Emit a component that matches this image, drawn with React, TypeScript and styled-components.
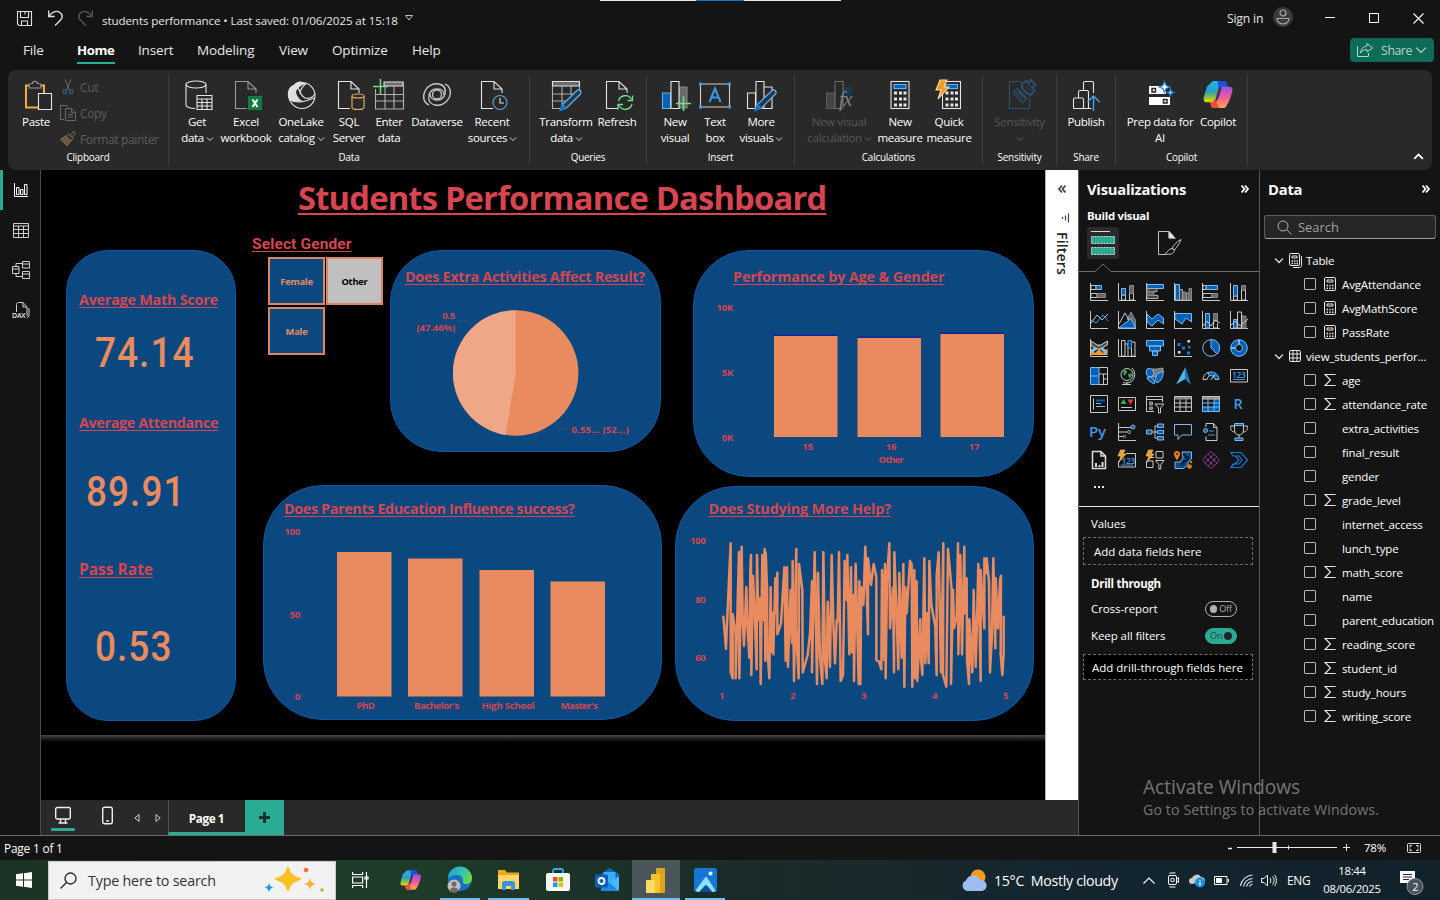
import React from "react";
import styled, { createGlobalStyle, css } from "styled-components";

const teal = "#2aac94";
const panelBlue = "#0a487f";
const orange = "#e98b5f";
const red = "#d64550";
const blue = "#0063b8";
const sky = "#7fb8ea";
const grey = "#c8c8c8";

const GlobalStyle = createGlobalStyle`
  * { box-sizing: border-box; }
  body {
    margin: 0;
    background: #141414;
    font-family: "Open Sans", "Noto Sans", sans-serif;
    font-size: 11.5px;
    letter-spacing: -0.2px;
    color: #fff;
    overflow: hidden;
  }
  svg { display: block; flex: none; overflow: visible; }
`;

const Window = styled.div`
  width: 1440px;
  height: 900px;
  display: flex;
  flex-direction: column;
  background: #141414;
`;

/* ---------- title bar ---------- */

const TitleBar = styled.header`
  height: 36px;
  display: flex;
  align-items: center;
  padding-left: 17px;
  position: relative;
  color: #e6e6e6;
`;
const TopMarker = styled.div`
  position: absolute;
  left: 600px;
  top: 0;
  width: 241px;
  height: 1px;
  background: linear-gradient(90deg, #e8e8e8 96px, #0078d4 96px, #0078d4 144px, #e8e8e8 144px);
`;
const Slot = styled.div<{ $w: number }>`
  width: ${(p) => p.$w}px;
  flex: none;
`;
const DocName = styled.div`
  width: 303px;
  padding-top: 4px;
  font-size: 11.6px;
  letter-spacing: -0.1px;
  white-space: pre;
`;
const Spacer = styled.div`
  flex: 1;
`;
const SignIn = styled.div`
  width: 46px;
  font-size: 12.2px;
  letter-spacing: -0.2px;
`;

/* ---------- tab strip ---------- */

const TabStrip = styled.nav`
  height: 34px;
  display: flex;
  padding-left: 23px;
  padding-right: 6px;
  font-size: 13.5px;
  letter-spacing: -0.15px;
  color: #e8e8e8;
`;
const Tab = styled.div<{ $w: number; $active?: boolean }>`
  width: ${(p) => p.$w}px;
  span {
    display: inline-block;
    height: 28px;
    line-height: 28px;
    ${(p) =>
      p.$active &&
      css`
        width: 38px;
        font-weight: 700;
        font-size: 13.2px;
        letter-spacing: -0.4px;
        color: #fff;
        border-bottom: 2px solid ${teal};
      `}
  }
`;
const ShareButton = styled.button`
  width: 84px;
  height: 24px;
  margin-top: 2px;
  border: 0;
  border-radius: 4px;
  background: #0d6b58;
  color: #b9d2cb;
  display: flex;
  align-items: center;
  padding: 0 7px;
  font: 12.3px "Open Sans", sans-serif;
  letter-spacing: -0.45px;
  span {
    width: 31px;
    margin: 0 4px 0 8px;
  }
`;

/* ---------- ribbon ---------- */

const Ribbon = styled.section`
  height: 100px;
  margin: 0 8px;
  background: #292929;
  border-radius: 8px;
  display: flex;
  padding: 4px 0;
  position: relative;
`;
const Group = styled.div<{ $w: number }>`
  width: ${(p) => p.$w}px;
  height: 92px;
  border-right: 1px solid #3d3d3d;
  display: flex;
  flex-direction: column;
`;
const GroupItems = styled.div<{ $pad: number }>`
  display: flex;
  height: 76px;
  padding-left: ${(p) => p.$pad}px;
`;
const GroupName = styled.div`
  text-align: center;
  font-size: 9.9px;
  font-weight: 500;
  letter-spacing: -0.2px;
  line-height: 15px;
`;
const Command = styled.div<{ $w: number; $dim?: boolean }>`
  width: ${(p) => p.$w}px;
  flex: none;
  display: flex;
  flex-direction: column;
  align-items: center;
  font-weight: ${(p) => (p.$dim ? 400 : 500)};
  letter-spacing: -0.3px;
  color: ${(p) => (p.$dim ? "#575757" : "#fff")};
  svg.big {
    margin-top: 5px;
    margin-bottom: 4px;
  }
`;
const CommandText = styled.div`
  white-space: nowrap;
  line-height: 16px;
  height: 16px;
  display: flex;
  align-items: center;
  gap: 3px;
  svg {
    margin-top: 2px;
  }
`;
const ClipList = styled.div`
  display: flex;
  flex-direction: column;
  padding: 0 0 0 3px;
  color: #5c5c5c;
`;
const ClipRow = styled.div`
  height: 26px;
  flex: none;
  display: flex;
  align-items: center;
  gap: 4px;
  font-size: 12px;
  letter-spacing: -0.35px;
  white-space: nowrap;
`;
const Collapse = styled.div`
  position: absolute;
  right: 9px;
  bottom: 11px;
`;

/* ---------- body ---------- */

const Body = styled.main`
  height: 665px;
  display: flex;
`;
const Rail = styled.aside`
  width: 41px;
  border-right: 1px solid #4a4a4a;
  display: flex;
  flex-direction: column;
`;
const RailItem = styled.div<{ $active?: boolean }>`
  height: 40px;
  display: flex;
  align-items: center;
  justify-content: center;
  padding-right: 2px;
  border-left: 3px solid ${(p) => (p.$active ? teal : "transparent")};
`;
const Center = styled.div`
  width: 1037px;
  display: flex;
  flex-direction: column;
`;
const CenterTop = styled.div`
  height: 630px;
  display: flex;
`;
const Canvas = styled.div`
  position: relative;
  width: 1004px;
  background: #000;
  overflow: hidden;
`;
const PageEdge = styled.div`
  position: absolute;
  left: 0;
  right: 0;
  top: 565px;
  height: 7px;
  background: linear-gradient(#484848, #1c1c1c 55%, #000);
`;
const Visual = styled.section<{ $x: number; $y: number; $w: number; $h: number; $r: number }>`
  position: absolute;
  left: ${(p) => p.$x}px;
  top: ${(p) => p.$y}px;
  width: ${(p) => p.$w}px;
  height: ${(p) => p.$h}px;
  border-radius: ${(p) => p.$r}px;
  border: 1px solid #0d59a5;
  background: ${panelBlue};
  > svg {
    position: absolute;
    left: -1px;
    top: -1px;
  }
`;
const Caption = styled.h2<{ $x: number; $y: number; $ls: number; $size?: number }>`
  position: absolute;
  left: ${(p) => p.$x}px;
  top: ${(p) => p.$y}px;
  margin: 0;
  font-size: ${(p) => p.$size ?? 14.4}px;
  letter-spacing: ${(p) => p.$ls}px;
  line-height: 20px;
  font-weight: 700;
  color: ${red};
  white-space: nowrap;
  text-decoration: underline;
  text-decoration-thickness: 1px;
  text-underline-offset: 2px;
  text-decoration-skip-ink: none;
`;
const PageTitle = styled(Caption)`
  line-height: 44px;
  text-decoration-thickness: 2px;
  text-underline-offset: 3px;
`;
const SlicerTitle = styled(Caption)`
  font-family: Roboto, sans-serif;
`;
const ScoreCard = styled.div<{ $x: number; $y: number }>`
  position: absolute;
  left: ${(p) => p.$x}px;
  top: ${(p) => p.$y}px;
  font: 500 43px/48px Roboto, sans-serif;
  letter-spacing: 1.2px;
  color: ${orange};
  transform: scaleX(0.86);
  transform-origin: 0 0;
  white-space: nowrap;
`;
const Slicer = styled.div`
  position: absolute;
  left: 227px;
  top: 87px;
  display: grid;
  grid-template-columns: 57px 57px;
  grid-auto-rows: 48px;
  gap: 2px 1px;
`;
const SlicerButton = styled.div<{ $on?: boolean }>`
  border: 2px solid #dc8560;
  background: ${(p) => (p.$on ? "#c0c0c0" : panelBlue)};
  color: ${(p) => (p.$on ? "#000" : orange)};
  font-size: 9.4px;
  font-weight: 700;
  letter-spacing: -0.25px;
  display: flex;
  align-items: center;
  justify-content: center;
`;
const ChartText = styled.text`
  font: 700 9.6px "Open Sans", sans-serif;
  letter-spacing: -0.3px;
  fill: ${red};
`;

const FiltersPane = styled.aside`
  width: 33px;
  background: #fff;
  border-left: 1px solid #b5b5b5;
  color: #252423;
  display: flex;
  flex-direction: column;
  align-items: center;
  padding-top: 15px;
`;
const FilterGlyph = styled.svg`
  margin: 20px 0 0 6px;
`;
const FiltersLabel = styled.div`
  writing-mode: vertical-rl;
  font-size: 14.2px;
  font-weight: 600;
  letter-spacing: 0.1px;
  line-height: 20px;
  margin-top: 9px;
`;

const PageTabs = styled.div`
  height: 35px;
  background: #292929;
  display: flex;
  align-items: center;
`;
const ViewButton = styled.div<{ $w: number; $active?: boolean }>`
  width: ${(p) => p.$w}px;
  height: 35px;
  display: flex;
  flex-direction: column;
  align-items: center;
  justify-content: space-between;
  padding: 7px 0 4px;
  &::after {
    content: "";
    width: 24px;
    height: 3px;
    border-radius: 1px;
    background: ${(p) => (p.$active ? teal : "transparent")};
  }
`;
const PageTab = styled.div`
  width: 77px;
  height: 35px;
  border-left: 1px solid #555;
  border-bottom: 3px solid ${teal};
  padding-right: 1px;
  text-align: center;
  font-weight: 700;
  font-size: 11.8px;
  letter-spacing: -0.45px;
  line-height: 37px;
`;
const AddPage = styled.div`
  width: 39px;
  height: 35px;
  background: ${teal};
  display: flex;
  align-items: center;
  justify-content: center;
`;

/* ---------- right panes ---------- */

const Pane = styled.aside<{ $w: number }>`
  width: ${(p) => p.$w}px;
  border-left: 1px solid #555;
  display: flex;
  flex-direction: column;
`;
const PaneHeader = styled.div`
  height: 38px;
  padding: 0 10px 0 8px;
  display: flex;
  align-items: center;
  justify-content: space-between;
  font-size: 14.8px;
  font-weight: 700;
  letter-spacing: -0.25px;
`;
const BuildLabel = styled.div`
  padding-left: 8px;
  height: 19px;
  line-height: 16px;
  font-weight: 700;
  letter-spacing: -0.3px;
  font-size: 11.4px;
`;
const Modes = styled.div`
  display: flex;
  gap: 34px;
  padding-left: 8px;
  height: 37px;
`;
const Mode = styled.div<{ $active?: boolean }>`
  width: 32px;
  height: 32px;
  border-radius: 2px;
  background: ${(p) => (p.$active ? "#2a2a2a" : "transparent")};
  display: flex;
  align-items: center;
  justify-content: center;
`;
const VizGrid = styled.div`
  display: grid;
  grid-template-columns: repeat(6, 28px);
  grid-auto-rows: 28px;
  padding: 5px 0 0 6px;
  place-items: center;
`;
const More = styled.div`
  height: 32px;
  padding: 12px 0 0 15px;
  display: flex;
  gap: 2px;
  i {
    width: 2px;
    height: 2px;
    background: #eee;
  }
`;
const Wells = styled.div`
  border-top: 1px solid #e5e5e5;
  padding: 8px 6px 0 4px;
`;
const WellLabel = styled.div<{ $bold?: boolean }>`
  height: 18px;
  line-height: 18px;
  padding-left: 8px;
  font-weight: ${(p) => (p.$bold ? 700 : 400)};
  letter-spacing: ${(p) => (p.$bold ? -0.3 : -0.1)}px;
`;
const Well = styled.div<{ $dark?: boolean }>`
  height: ${(p) => (p.$dark ? 26 : 28)}px;
  margin: ${(p) => (p.$dark ? "5px 0 0" : "4px 0 10px")};
  padding-left: ${(p) => (p.$dark ? 8 : 10)}px;
  border: 1px dashed #6e6e6e;
  background: ${(p) => (p.$dark ? "#000" : "transparent")};
  letter-spacing: 0;
  display: flex;
  align-items: center;
  white-space: nowrap;
`;
const Switches = styled.div`
  padding-top: 2px;
`;
const SwitchRow = styled.div`
  height: 27px;
  padding: 0 16px 0 8px;
  letter-spacing: -0.08px;
  display: flex;
  align-items: center;
  justify-content: space-between;
`;
const Switch = styled.div<{ $on?: boolean }>`
  width: 32px;
  height: 16px;
  border-radius: 8px;
  border: 1px solid ${(p) => (p.$on ? teal : "#b0b0b0")};
  background: ${(p) => (p.$on ? teal : "transparent")};
  color: ${(p) => (p.$on ? "#1c4a41" : "#b0b0b0")};
  display: flex;
  flex-direction: ${(p) => (p.$on ? "row-reverse" : "row")};
  align-items: center;
  gap: 2px;
  padding: 0 4px;
  font-size: 9px;
  &::before {
    content: "";
    width: 8px;
    height: 8px;
    border-radius: 4px;
    background: ${(p) => (p.$on ? "#262626" : "#b0b0b0")};
  }
`;
const SearchBox = styled.div`
  margin: 7px 4px 9px;
  height: 24px;
  border: 1px solid #5e5e5e;
  border-bottom-color: #a0a0a0;
  border-radius: 3px;
  background: #262626;
  display: flex;
  align-items: center;
  gap: 6px;
  padding-left: 12px;
  color: #a0a0a0;
  font-size: 12.9px;
  letter-spacing: 0;
`;
const TableRow = styled.div`
  height: 24px;
  display: flex;
  align-items: center;
  padding-left: 15px;
  white-space: nowrap;
  font-weight: 500;
  letter-spacing: -0.15px;
  span {
    margin-left: 4px;
  }
`;
const FieldRow = styled.div`
  height: 24px;
  display: flex;
  align-items: center;
  padding-left: 44px;
  white-space: nowrap;
  font-weight: 500;
  letter-spacing: -0.14px;
`;
const Check = styled.div`
  width: 12px;
  height: 12px;
  border: 1px solid #b8b8b8;
  border-radius: 1px;
  margin-right: 8px;
  margin-bottom: 1px;
`;
const FieldIcon = styled.div`
  width: 18px;
  margin-bottom: 1px;
`;
const Watermark = styled.div`
  position: absolute;
  left: 1143px;
  top: 774px;
  color: rgba(255, 255, 255, 0.42);
  white-space: nowrap;
  h3 {
    margin: 0;
    font-size: 19.2px;
    font-weight: 400;
    letter-spacing: -0.02px;
    line-height: 26px;
  }
  p {
    margin: 0;
    font-size: 14.2px;
    letter-spacing: 0.1px;
    line-height: 20px;
  }
`;

/* ---------- bottom bars ---------- */

const StatusBar = styled.footer`
  height: 25px;
  border-top: 1px solid #6a6a6a;
  display: flex;
  align-items: center;
  padding: 0 19px 1px 4px;
  font-size: 11.9px;
`;
const Zoom = styled.div`
  display: flex;
  align-items: center;
  gap: 13px;
  font-size: 11.5px;
  svg:last-child {
    margin-left: 8px;
  }
`;
const Taskbar = styled.footer`
  height: 40px;
  display: flex;
  align-items: center;
  background: linear-gradient(90deg, #1d3325, #1f3c2a 28%, #1b2d28 48%, #13252f 75%, #12222b);
`;
const TaskSlot = styled.div<{ $w: number; $open?: boolean; $active?: boolean }>`
  width: ${(p) => p.$w}px;
  height: 40px;
  flex: none;
  display: flex;
  align-items: center;
  justify-content: center;
  background: ${(p) => (p.$active ? "#4a565a" : "transparent")};
  box-shadow: ${(p) => (p.$open ? "inset 0 -2px 0 #76b9ed" : "none")};
`;
const TaskSearch = styled.div`
  width: 288px;
  height: 39px;
  background: #f2f2f2;
  border: 1px solid #c9c9c9;
  color: #333;
  display: flex;
  align-items: center;
  padding: 0 10px 0 11px;
  font-size: 14.3px;
  letter-spacing: -0.2px;
  span {
    flex: 1;
    margin-left: 11px;
  }
`;
const Weather = styled.div`
  display: flex;
  align-items: center;
  font-size: 14.2px;
  letter-spacing: -0.3px;
  white-space: pre;
  width: 178px;
  gap: 6px;
`;
const Lang = styled.div`
  width: 35px;
  font-size: 11.8px;
`;
const Clock = styled.div`
  width: 60px;
  text-align: center;
  font-size: 11.3px;
  line-height: 18px;
  letter-spacing: -0.25px;
`;
const Notifications = styled.div`
  width: 58px;
  flex: none;
  padding-left: 17px;
`;

/* ---------- small drawings ---------- */

const Chevron = ({ color = "#ddd", s = 6, up = false, w = 1.3 }: { color?: string; s?: number; up?: boolean; w?: number }) => (
  <svg width={s} height={s / 2 + 1} viewBox="0 0 8 5" fill="none" stroke={color} strokeWidth={w}>
    <path d={up ? "M0 4.5 4 .5 8 4.5" : "M0 .5 4 4.5 8 .5"} />
  </svg>
);
const DoubleChevron = ({ flip, color = "#fff" }: { flip?: boolean; color?: string }) => (
  <svg width="8" height="8" viewBox="0 0 8 8" fill="none" stroke={color} strokeWidth="1.8">
    <path d={flip ? "M4 .5 1 4 4 7.5M7.5 .5 4.5 4 7.5 7.5" : "M.5 .5 3.500 4 .5 7.5M4 .5 7 4 4 7.5"} />
  </svg>
);

const Big = ({ children }: { children: React.ReactNode }) => (
  <svg className="big" width="32" height="31" viewBox="0 0 32 31" fill="none" stroke="#e4e4e4" strokeWidth="1.1">
    {children}
  </svg>
);
const Doc = ({ c = "#e4e4e4" }: { c?: string }) => (
  <path stroke={c} d="M17 29.5H5.5V2.5H18L26 10V14M18 2.5V10H26" />
);
const Pencil = () => (
  <g stroke="#69b1ec" strokeWidth="1.2">
    <path fill="#1d3c55" d="M12 26 27 11.500a2.500 2.500 0 0 1 3.500 3.500L16 29.500z" />
    <path fill="#0d70c4" stroke="#1c7fd0" d="M12 26 16 29.500 10 31.500z" />
  </g>
);
const Calc = ({ x = 7 }: { x?: number }) => (
  <g>
    <rect x={x} y="2.5" width="18" height="27" />
    <rect x={x + 3} y="5.5" width="12" height="4" fill={blue} stroke="#69b1ec" />
    {[12, 18, 24].map((y) =>
      [3, 8, 12.5].map((dx) => <rect key={`${y}${dx}`} x={x + dx} y={y + 0.5} width="3" height="3" fill="#e4e4e4" stroke="none" />)
    )}
  </g>
);
const CopilotMark = ({ size }: { size: number }) => (
  <svg className={size > 24 ? "big" : ""} width={size} height={size} viewBox="0 0 32 32">
    <defs>
      <linearGradient id="cpA" x1="0" y1="0" x2="0" y2="1">
        <stop offset="0" stopColor="#20b4f5" />
        <stop offset=".5" stopColor="#2a9fc0" />
        <stop offset=".75" stopColor="#7fc24a" />
        <stop offset="1" stopColor="#f5d400" />
      </linearGradient>
      <linearGradient id="cpB" x1="0" y1="0" x2="0" y2="1">
        <stop offset="0" stopColor="#a14de8" />
        <stop offset=".5" stopColor="#ee5a98" />
        <stop offset="1" stopColor="#ffad45" />
      </linearGradient>
    </defs>
    <path d="M8 4C9 2.500 10 2 12 2h9c3 0 3.500 2 4.500 6h-5c-3 0-4 1.500-5 5l-2.500 7c-1 3-2 4-5 4H4c-3 0-4-2-3-6l3-10z" fill="url(#cpA)" />
    <path d="M15 2h6c3 0 3.500 2 4.500 6h-5c-2.500 0-3 .5-4 3z" fill="#1b4fd8" />
    <path d="M24 28c-1 1.700-2 2-4 2h-8c-3 0-3.500-2-4.500-6 3 0 4-1 5-4l2.500-7c1-3.500 2-5 5-5h7c3.500 0 4 2 3 6l-3 9z" fill="url(#cpB)" />
    <path d="M17 30h-6c-2.500 0-3-2-3.700-6 3 0 4-.5 5-3z" fill="#ee5138" />
    <path d="M14.500 15 16.500 8.500h3L17 17c-1 3.500-2 5.500-4.500 6.500z" fill="#1c2440" opacity=".75" />
  </svg>
);

/* ---------- ribbon data ---------- */

type Cmd = { w: number; lines: string[]; icon: React.ReactNode; menu?: boolean; dim?: boolean };
type Grp = { name: string; w: number; pad: number; items: Cmd[] };

const icons = {
  getData: (
    <Big>
      <ellipse cx="15" cy="5.5" rx="10" ry="3.5" />
      <path d="M5 5.500V26c0 2 4 3.500 9 3.500M25 5.500V14" />
      <path d="M16 16.500h15v14H16zM16 20h15M16 23.500h15M16 27h15M21 20v10.500M26 20v10.500" />
    </Big>
  ),
  excel: (
    <Big>
      <Doc c="#9a9a9a" />
      <rect x="18" y="17" width="14" height="14" fill="#107c41" stroke="none" />
      <path d="M22.500 20.500 27.500 28M27.500 20.500 22.500 28" stroke="#fff" strokeWidth="2" />
    </Big>
  ),
  oneLake: (
    <Big>
      <path fill="#dedede" stroke="none" d="M4 21C1 13 4 7 9 6 11 2 17 1 21 5c-5 1-9 4-10 8 1 5 4 8 7 9-6 1-10 1-14-1z" />
      <circle cx="17" cy="16.500" r="13" />
      <path d="M12 5c2 7 4 12 8 14 4 1 8-1 10-4M4 20c7 5 15 3 25-1M21 5c-4 2-6 7-6 10" />
    </Big>
  ),
  sql: (
    <Big>
      <Doc />
      <g stroke="#f3b565" fill="#292929">
        <path d="M19 17v11.500c0 1.300 2.500 2 6 2s6-.7 6-2V17" />
        <ellipse cx="25" cy="17" rx="6" ry="2" />
      </g>
    </Big>
  ),
  enter: (
    <Big>
      <path fill="#6a6a6a" d="M11 3h19v4H11z" />
      <path d="M2.500 10v20h28V3M2.500 15.500h28M2.500 22h28M12 7v22.500M21 7v22.500" stroke="#b0b0b0" />
      <path d="M0 7.500h15M7.500 0v15" stroke="#6fe08a" strokeWidth="1.500" />
    </Big>
  ),
  dataverse: (
    <Big>
      <g stroke="#c9c9c9" strokeWidth="1.300">
        <circle cx="16" cy="15.500" r="4.500" />
        <path d="M24 5c5 2 7 8 4 14-3 6-9 8-14 7-5-1-7-5-6-10 1-4 5-7 9-6 4 0 6 3 6 6" />
        <path d="M8 26c-5-2-7-8-4-14 3-6 9-8 14-7 5 1 7 5 6 10-1 4-5 7-9 6-4 0-6-3-6-6" />
      </g>
    </Big>
  ),
  recent: (
    <Big>
      <Doc />
      <circle cx="24" cy="23.500" r="7" stroke="#5aa9ea" fill="#292929" />
      <path d="M24 19v5h4" />
    </Big>
  ),
  transform: (
    <Big>
      <path fill="#6a6a6a" d="M2.500 2.500h27V7h-27z" />
      <path d="M2.500 7v22.500H13M29.500 7v6M2.500 15H23M2.500 22H16M12 7v18M21 7v9" stroke="#b0b0b0" />
      <Pencil />
    </Big>
  ),
  refresh: (
    <Big>
      <Doc />
      <g stroke="#6fe08a" strokeWidth="1.300">
        <path d="M17.500 22a7 7 0 0 1 13-1.500M31 25a7 7 0 0 1-13 1.500" />
        <path d="M31.500 16.500v5h-5M17 30.500v-5h5" />
      </g>
    </Big>
  ),
  newVisual: (
    <Big>
      <path fill={blue} stroke="#69b1ec" d="M3.500 14h8v15.500h-8z" />
      <path fill="#6a6a6a" stroke="#888" d="M20 8h8v21h-8z" />
      <path d="M12 2.500h8v27h-8z" fill="#292929" />
      <path d="M17 24.500h15M24.500 17v15" stroke="#6fe08a" strokeWidth="1.500" />
    </Big>
  ),
  textBox: (
    <Big>
      <path d="M1.500 5h29v23h-29z" stroke="#d0d0d0" />
      <path d="M10.500 23 16 9.500 21.500 23M12.500 18.500h7" stroke="#3d98e3" strokeWidth="2" />
      <g fill="#3d98e3" stroke="none">
        <path d="M0 3.500h3v3H0zM29 3.500h3v3h-3zM0 26.500h3v3H0zM29 26.500h3v3h-3z" />
      </g>
    </Big>
  ),
  moreVisuals: (
    <Big>
      <path d="M2.500 14h8v15.500h-8zM11 2.500h8v27h-8zM19 8h8v21.500h-8z" />
      <Pencil />
    </Big>
  ),
  visualCalc: (
    <Big>
      <path fill="#444" stroke="#5a5a5a" d="M3.500 14h8v15.500h-8z" />
      <path fill="#16395a" stroke="none" d="M20 8h9v8h-9z" />
      <path stroke="#6a6a6a" d="M12 2.500h8v27h-8z" fill="#292929" />
      <text x="16" y="27" stroke="none" fill="#808080" fontFamily="Liberation Serif" fontStyle="italic" fontSize="20" letterSpacing="-1">fx</text>
    </Big>
  ),
  measure: (
    <Big>
      <Calc />
    </Big>
  ),
  quick: (
    <Big>
      <Calc x={9.5} />
      <path d="M7 1h7l-3 7h5L5 20l3-9H3z" fill="#f09a2d" stroke="#ffdca0" />
    </Big>
  ),
  sensitivity: (
    <Big>
      <g stroke="#2b4f6d">
        <path d="M18 2.500H5.500v27h20V18" />
        <path d="M9 13.500 13.500 9.500 23 19.500 18.500 24zM12 13.500l7 7M14 12l7 7" strokeWidth="1.200" />
        <path d="M18 8.500 22.500 14l4 2 4-4-2-3 3-3.500L27 1l-3 3-2-2-4 3z" strokeWidth="2" />
        <path d="M22 7l4 5M25 5l3 4" />
      </g>
    </Big>
  ),
  publish: (
    <Big>
      <path d="M8.500 18.500V13c0-1 .5-1.500 1.500-1.500h7c1 0 1.500.5 1.500 1.500v16.500M3.500 29.500V20.500c0-1 .5-1.500 1.500-1.500h7c1 0 1.500.5 1.500 1.500v9M13.500 11V4c0-1 .5-1.500 1.500-1.500h7c1 0 1.500.5 1.500 1.500v10M3.500 29.500h18" />
      <path d="M23.500 32V17M17.500 23l6-6 6 6" stroke="#4ba3ec" strokeWidth="1.400" />
    </Big>
  ),
  prep: (
    <Big>
      <path d="M5 7h17v8H5zM5 18h21v8H5z" fill="#fff" stroke="none" />
      <path d="M8 9.500h3.500V13H8zM19.500 20.500H23V24h-3.500z" fill="#fff" stroke="#292929" strokeWidth="1.500" />
      <path d="M20.500 2.500 22.200 6.500 26 8 22.200 9.500 20.500 13.500 18.800 9.500 15 8 18.800 6.500z" fill="#fff" stroke="#1280d0" />
      <path d="M26.500 10 27.500 12.500 30 13.500 27.500 14.500 26.500 17 25.500 14.500 23 13.500 25.500 12.500z" fill="#bfe3ff" stroke="#1280d0" />
    </Big>
  ),
};

const groups: Grp[] = [
  {
    name: "Data",
    w: 361,
    pad: 6,
    items: [
      { w: 44, lines: ["Get", "data"], menu: true, icon: icons.getData },
      { w: 54, lines: ["Excel", "workbook"], icon: icons.excel },
      { w: 56, lines: ["OneLake", "catalog"], menu: true, icon: icons.oneLake },
      { w: 40, lines: ["SQL", "Server"], icon: icons.sql },
      { w: 40, lines: ["Enter", "data"], icon: icons.enter },
      { w: 56, lines: ["Dataverse"], icon: icons.dataverse },
      { w: 54, lines: ["Recent", "sources"], menu: true, icon: icons.recent },
    ],
  },
  {
    name: "Queries",
    w: 117,
    pad: 9,
    items: [
      { w: 54, lines: ["Transform", "data"], menu: true, icon: icons.transform },
      { w: 48, lines: ["Refresh"], icon: icons.refresh },
    ],
  },
  {
    name: "Insert",
    w: 148,
    pad: 8,
    items: [
      { w: 40, lines: ["New", "visual"], icon: icons.newVisual },
      { w: 40, lines: ["Text", "box"], icon: icons.textBox },
      { w: 52, lines: ["More", "visuals"], menu: true, icon: icons.moreVisuals },
    ],
  },
  {
    name: "Calculations",
    w: 188,
    pad: 8,
    items: [
      { w: 72, lines: ["New visual", "calculation"], menu: true, dim: true, icon: icons.visualCalc },
      { w: 50, lines: ["New", "measure"], icon: icons.measure },
      { w: 48, lines: ["Quick", "measure"], icon: icons.quick },
    ],
  },
  { name: "Sensitivity", w: 74, pad: 0, items: [{ w: 73, lines: ["Sensitivity", ""], menu: true, dim: true, icon: icons.sensitivity }] },
  { name: "Share", w: 59, pad: 0, items: [{ w: 58, lines: ["Publish"], icon: icons.publish }] },
  {
    name: "Copilot",
    w: 132,
    pad: 6,
    items: [
      { w: 76, lines: ["Prep data for", "AI"], icon: icons.prep },
      { w: 40, lines: ["Copilot"], icon: <CopilotMark size={31} /> },
    ],
  },
];

/* ---------- visualization gallery ---------- */

const axis = <path d="M.5 0v17.500H18" stroke={grey} />;
const N = "none";
const gallery: React.ReactNode[] = [
  <>{axis}<path d="M1 2.500h5v4H1zM1 10.500h6v4H1z" stroke={grey} /><path d="M6 2.500h5.500v4H6z" fill={blue} stroke={sky} /><path d="M7 10.500h8.500v4H7z" fill="#666" stroke="#888" /></>,
  <>{axis}<path d="M3.500 12h4v5h-4zM11.500 10h4v7h-4z" stroke={grey} /><path d="M3.500 5.500h4V12h-4z" fill={blue} stroke={sky} /><path d="M11.500 2.500h4v8h-4z" fill="#666" stroke="#888" /></>,
  <>{axis}<path d="M1 1.500h16.500v4H1z" fill={blue} stroke={sky} /><path d="M1 5.500h10v3H1zM1 12.500h11v3H1z" fill="#444" stroke="#aaa" /><path d="M1 8.500h7v4H1z" fill="#666" stroke="#888" /></>,
  <>{axis}<path d="M1.500 1.500h4V17h-4z" fill={blue} stroke={sky} /><path d="M5.500 6.500h3V17h-3zM12.500 10h2.500v7h-2.500z" fill="#444" stroke="#aaa" /><path d="M9 9h3v8H9zM15 5.500h2.500V17H15z" fill="#666" stroke="#888" /></>,
  <>{axis}<path d="M1 2.500h3v4H1zM1 10.500h9v4H1z" stroke={grey} /><path d="M4.500 2.500h11v4h-11z" fill={blue} stroke={sky} /><path d="M10 10.500h5.500v4H10z" fill="#666" stroke="#888" /></>,
  <>{axis}<path d="M3.500 13h4v4h-4zM11.500 7h4v10h-4z" stroke={grey} /><path d="M3.500 2.500h4V13h-4z" fill={blue} stroke={sky} /><path d="M11.500 2.500h4V7h-4z" fill="#666" stroke="#888" /></>,
  <>{axis}<path d="M1 12 7 4l5 5 6-6" stroke={grey} /><path d="m1 9 5 3 7-8 5 6" stroke="#3d98e3" /></>,
  <>{axis}<path d="M9 8 13 1l4.500 8v8z" fill="#666" stroke="#888" /><path d="M1 13 7 2l6 10" stroke={grey} /><path d="M1 17 7 12l2-1 4-4 4.500 10z" fill={blue} stroke={sky} /></>,
  <><path d="M1 3 6 8l6-5 5.500 4v6L12 9l-6 6-5-4z" fill={blue} stroke={sky} />{axis}</>,
  <><path d="M1 2.500h16.500V11L12 7l-4 6-7-5z" fill={blue} stroke={sky} />{axis}</>,
  <>{axis}<path d="M3.500 2.500h4V17h-4z" fill={blue} stroke={sky} /><path d="M11.500 2.500h4V10h-4z" fill="#666" stroke="#888" /><path d="m1 15 4-5 4 5 4-6 5 3M11.500 10v7h4v-5" stroke={grey} /></>,
  <>{axis}<path d="M3.500 8.500h3.500V17H3.500z" fill={blue} stroke={sky} /><path d="M12 5h4v12h-4z" fill="#666" stroke="#888" /><path d="M7.500 1h4v16h-4z M1 14l5-4 4 5 8-7" stroke={grey} /></>,
  <><path d="M1 9 5 14l4-4 4 4 4.500-5v7H1z" fill="#f09a2d" stroke={N} /><path d="M1 13 9 7l8 7" stroke={sky} strokeWidth="3" /><path d="M1 2 9 7 17.500 2v4L9 10.500 1 7z" fill="#555" stroke={grey} />{axis}</>,
  <>{axis}<path d="M3.500 1.500h3.500V17H3.500zM7 5h3v12M13.500 3h3.500v14h-3.500z" stroke={grey} /><path d="M10 9h3.500V1.500H10z" fill="#123a60" stroke="#3d98e3" /></>,
  <g fill={blue} stroke={sky}><path d="M.5 1.500h17V7H.5zM3.500 7h11v5h-11zM6.500 12h5v4.500h-5z" /></g>,
  <>{axis}<path d="M3.500 4h3v3h-3zM8 7.500h3v3H8zM14 7h2.500v2.500H14zM13 12.500h3v3h-3z" fill="#1d78cf" stroke={N} /><path d="M13.500 1h2.500v2.500h-2.500zM4 12h2.500v2.500H4z" fill="#ddd" stroke={N} /></>,
  <><circle cx="9" cy="9" r="8.300" stroke={sky} /><path d="M9 .7V9l6 6A8.300 8.300 0 0 0 9 .7z" fill={blue} stroke={sky} /></>,
  <><circle cx="9" cy="9" r="6" stroke={blue} strokeWidth="5" /><circle cx="9" cy="9" r="8.300" stroke={sky} /><circle cx="9" cy="9" r="3.500" stroke={sky} /><path d="M9 1v4M1 9h4" stroke="#fff" /></>,
  <><path d="M.5 .5h8.500v17H.5z" fill={blue} stroke={sky} /><path d="M.5 9H9" stroke={sky} /><path d="M9 .5h8.500v17H9M9 7h8.500M13.500 7v10.500M13.500 12h4" stroke={grey} /></>,
  <><circle cx="9" cy="7.500" r="6" stroke={grey} /><path d="M5 4c2-2 4-1 4 1s-2 2-3 4zM10 7c2 0 3-1 4 0s-2 4-3 4z" fill="#2fa84f" stroke={N} /><path d="M14 1a9 9 0 0 1 0 13c-3 2.500-7 2.500-9 1.500M9 15v2.500M4 17.500h9" stroke={grey} /></>,
  <><path d="M6 2h5l6-1v6l-5 3H7l1-4z" fill="#777" stroke="#999" /><path d="M1 2c3-1 5 0 5 0l2 4-2 4H3L0 7zM11 7l6-3v4l-2 5-4 3-2-3zM1 10l5 0 3 5-1 2-6-4z" fill={blue} stroke={sky} /></>,
  <><path d="M11.500 0 2 17.500 11 12z" fill="#51b7e8" stroke={N} /><path d="M11.500 0 17 18 11 12z" fill="#1f7cc2" stroke={N} /></>,
  <><path d="M1 12.500a8 8 0 0 1 5-7l1.500 3.500A4 4 0 0 0 5 12.500z" stroke={grey} /><path d="M6 5.500a8 8 0 0 1 11 7h-4a4 4 0 0 0-5.500-3.700z" fill={blue} stroke={sky} /><path d="m9 12.500 4-5" stroke="#fff" /></>,
  <><path d="M.5 2.500h17v12.500H.5z" stroke={grey} /><text x="2" y="11" fill="#3d98e3" stroke={N} fontSize="8.500" fontWeight="600" letterSpacing="-.3">123</text><path d="M3 12.500h12" stroke="#3d98e3" /></>,
  <><path d="M.5 .5h17v17H.5z" stroke={grey} /><path d="M3.500 3.500v11" stroke={grey} /><path d="M6 5.500h8M6 8.500h5M6 11.500h9" stroke={sky} /><path d="M6 4.500h9v2H6z" fill={blue} stroke={N} /></>,
  <><path d="M.5 2.500h17v13H.5z" stroke={grey} /><path d="M2.500 9 5.500 4l3 5z" fill="#39b054" stroke={N} /><path d="M9.500 4.500h6l-3 5z" fill="#e8383f" stroke={N} /><path d="M3 12.500h11" stroke={grey} /></>,
  <><path d="M8 16.500H.5v-15h16V7M.5 4.500h16" stroke={grey} /><path d="M3.500 7h3v3h-3zM3.500 12h3v2.500h-3z" fill="#777" stroke="#999" /><path d="M9 9h9l-3.500 4v5h-2v-5z" stroke={grey} /></>,
  <><path d="M.5 1.500h17v15H.5zM.5 8h17M.5 12h17M6 4v12.500M12 4v12.500" stroke={grey} /><path d="M1 2h16v2.500H1z" fill="#888" stroke={N} /></>,
  <><path d="M12 4h5.500v12.500H.5V12H12z" fill={blue} stroke={N} /><path d="M.5 1.500h17v15H.5zM.5 8h17M.5 12h17M6 4v12.500M12 4v12.500" stroke={sky} /><path d="M.5 1.500h17V4H.5z" fill="#888" stroke={grey} /></>,
  <text x="3.500" y="14" fill="#3d98e3" stroke={N} fontSize="14.500" fontWeight="600">R</text>,
  <text x="-1" y="14" fill="#3d98e3" stroke={N} fontSize="15" fontWeight="600">Py</text>,
  <>{axis}<path d="M1 4.500h12M1 9h9M1 13.500h5" stroke={grey} /><circle cx="15" cy="4" r="2" fill={blue} stroke={sky} /><circle cx="11" cy="9" r="1.500" stroke="#999" /><circle cx="6.500" cy="13.500" r="1.200" stroke="#999" /></>,
  <><path d="M6 9h5M11 3h-2v12h2" stroke={grey} /><g fill={blue} stroke={sky}><path d="M.5 7H6v4H.5zM11.500 1h6v3.500h-6zM11.500 7.300h6v3.500h-6zM11.500 13.500h6V17h-6z" /></g></>,
  <path d="M.5 1.500h17V12H8l-4 4.500V12H.5z" stroke={sky} />,
  <><path d="M4 4V.5h7.500L15 4.500v13H4v-4M11.500 .5v4H15" stroke={grey} /><circle cx="3.500" cy="7.500" r="2" fill={blue} stroke={sky} /><path d="M7 8h5M6 12h7" stroke="#3d98e3" /></>,
  <><path d="M4.500 1h9v6c0 3-2 5-4.500 5S4.500 10 4.500 7zM4.500 3H.5c0 4 1 6 4.500 6M13.500 3h4c0 4-1 6-4.500 6M9 12v3" stroke={grey} /><path d="M4.500 .5h9v2h-9zM5 15h8v2.500H5z" fill={blue} stroke={sky} /></>,
  <><path d="M2.500 .5H11L15.500 5v12.500h-13zM11 .5V5h4.500" stroke="#ddd" strokeWidth="1.500" /><path d="M5 12h2v4H5zM8.500 14h2v2h-2zM11.500 11h2v5h-2z" fill="#ddd" stroke={N} /></>,
  <><path d="M8 2.500h9.500V16H.5v-6" stroke={grey} /><text x="3.500" y="12.500" fill="#3d98e3" stroke={N} fontSize="8.500" fontWeight="600" letterSpacing="-.3">123</text><path d="M3 14h12" stroke="#3d98e3" /><path d="M2.500-1H7L5 3h3L1 11l2-6H0z" fill="#f09a2d" stroke="#ffc880" strokeWidth=".6" /></>,
  <><path d="M10 .5h7V7h-7zM.5 10H7v6.500H.5zM4 6.500h4" stroke={grey} /><path d="M9.500 9.500h8.500l-3.200 4v4.500h-2v-4.500z" stroke={grey} fill="#141414" /><path d="M2.500-1H7L5 3h3L1 11l2-6H0z" fill="#f09a2d" stroke="#ffc880" strokeWidth=".6" /></>,
  <><path d="M8 1h9.500v7l-3 2-1 4-4 3.500H1V11h5l3-4z" fill="#0a4a86" stroke={sky} /><path d="M9 3c3 1 1 3 4 3s1 4-2 4-1 3-4 4" stroke="#0b1c2c" strokeWidth="2" /><path d="M3 9.500C1 6 0 4.500 0 3a3 3 0 0 1 6 0c0 1.500-1 3-3 6.500z" fill="#ef7a1a" stroke={N} /><circle cx="3" cy="3" r="1" fill="#222" stroke={N} /><circle cx="15.500" cy="15.500" r="2.300" fill="#ef7a1a" stroke={N} /><circle cx="17" cy="11" r="1.200" fill="#ef7a1a" stroke={N} /></>,
  <g stroke="#8d2f99"><path d="M7.500 1.500Q9 0 10.500 1.500L16.500 7.500Q18 9 16.500 10.500L10.500 16.500Q9 18 7.500 16.500L1.500 10.500Q0 9 1.500 7.500z" /><path d="M9 6 6 9l3 3 3-3zM9 6 6.500 3.500M9 6l3-3M9 12l-3 3M9 12l2.500 2.500M6 9 3.500 6.500M6 9l-3 3M12 9l2.500-2.500M12 9l3 3" /></g>,
  <g stroke="#1478d4" strokeWidth="1.200"><path d="M1 1.500h10L17.500 9 11 16.500H1L3 13h6l3-4-3-4H3zM5.500 5 9 9l-8 7" /></g>,
];

/* ---------- fields ---------- */

const MeasureIcon = () => (
  <svg width="12" height="14" viewBox="0 0 12 14" fill="none" stroke="#e8e8e8">
    <rect x=".5" y=".5" width="11" height="13" rx="1.500" />
    <path d="M3 3h6v2H3z" />
    <path d="M2.500 8.500h1.500M5.300 8.500h1.500M8 8.500h1.500M2.500 11.200h1.500M5.300 11.200h1.500M8 11.200h1.500" strokeWidth="1.600" />
  </svg>
);
const SigmaIcon = () => (
  <svg width="12" height="12" viewBox="0 0 12 12" fill="none" stroke="#e8e8e8" strokeWidth="1.100">
    <path d="M11 1V.5H1L6.500 6 1 11.500h10V11" />
  </svg>
);
const TableIcon = () => (
  <svg width="13" height="12" viewBox="0 0 13 12" fill="none" stroke="#e8e8e8">
    <rect x=".5" y=".5" width="11" height="11" rx="1.500" />
    <path d="M.5 4h11M.5 8h11M4 .5v11M8 .5v11" />
  </svg>
);

const measures = ["AvgAttendance", "AvgMathScore", "PassRate"];
const fields: [string, boolean][] = [
  ["age", true],
  ["attendance_rate", true],
  ["extra_activities", false],
  ["final_result", false],
  ["gender", false],
  ["grade_level", true],
  ["internet_access", false],
  ["lunch_type", false],
  ["math_score", true],
  ["name", false],
  ["parent_education", false],
  ["reading_score", true],
  ["student_id", true],
  ["study_hours", true],
  ["writing_score", true],
];

/* Study-hours series in thirds of a pixel. */
const studySeries =
  "160,410 168,507 170,455 182,190 182,575 188,595 188,402 197,462 197,595 207,216 208,595 215,200 218,420 222,498 229,322 232,430 238,533 241,268 243,225 244,585 249,288 255,420 260,568 261,225 265,420 270,355 272,612 277,225 281,420 284,207 286,542 287,217 291,320 292,500 298,595 302,322 304,515 308,400 310,523 316,295 318,400 322,278 322,463 333,430 343,262 347,542 351,262 354,560 362,330 366,490 368,243 372,603 379,207 378,445 386,595 387,252 397,330 398,577 413,525 420,460 426,304 426,577 434,217 441,612 444,278 450,533 457,612 460,217 465,540 470,595 473,365 480,560 485,225 490,430 495,550 500,420 503,425 507,217 512,603 519,585 524,243 530,360 532,225 538,523 543,262 546,517 551,345 552,603 557,252 566,612 568,304 571,612 574,322 580,375 586,200 594,463 594,235 603,315 611,252 619,290 619,540 627,545 634,568 636,270 640,325 642,540 645,252 647,595 651,300 658,190 660,445 669,322 672,577 673,217 680,410 685,568 688,278 695,533 700,252 703,620 706,322 710,400 720,243 725,252 727,620 733,270 735,595 740,304 742,603 751,418 752,525 757,585 763,235 766,550 771,400 776,550 778,243 784,375 796,440 797,490 800,585 800,287 806,217 813,577 820,190 819,585 829,620 834,207 845,330 843,612 849,330 852,445 860,410 864,190 865,523 871,225 876,523 883,200 884,400 890,295 891,540 897,612 898,418 907,577 911,330 917,560 921,420 925,252 932,603 932,270 943,445 943,235 948,280 950,235 957,304 960,577 966,462 970,235 976,505 977,295 984,445 990,300 993,287 992,523 997,585 1001,520 1001,410";

const ageBars = [
  { x: 81, top: 86, label: "15" },
  { x: 164.5, top: 88, label: "16" },
  { x: 247.5, top: 84, label: "17" },
];
const parentBars = [
  { x: 74, top: 67, label: "PhD", w: 18 },
  { x: 145, top: 73.5, label: "Bachelor's", w: 45 },
  { x: 216.5, top: 85, label: "High School", w: 53 },
  { x: 287.5, top: 96.5, label: "Master's", w: 37 },
];

const Dashboard = () => (
  <Canvas>
    <PageTitle as="h1" $x={257} $y={6} $size={32.7} $ls={-0.8}>Students Performance Dashboard</PageTitle>
    <SlicerTitle $x={211} $y={64} $size={15.5} $ls={0.13}>Select Gender</SlicerTitle>
    <Slicer>
      <SlicerButton>Female</SlicerButton>
      <SlicerButton $on>Other</SlicerButton>
      <SlicerButton>Male</SlicerButton>
    </Slicer>

    <Visual $x={25} $y={80} $w={170} $h={471} $r={42}>
      <Caption $x={12} $y={39} $ls={-0.25}>Average Math Score</Caption>
      <ScoreCard $x={28} $y={77}>74.14</ScoreCard>
      <Caption $x={12} $y={162} $ls={-0.37}>Average Attendance</Caption>
      <ScoreCard $x={19} $y={216}>89.91</ScoreCard>
      <Caption $x={12} $y={308} $size={15.6} $ls={-0.05}>Pass Rate</Caption>
      <ScoreCard $x={28} $y={371}>0.53</ScoreCard>
    </Visual>

    <Visual $x={349} $y={80} $w={271} $h={201.5} $r={52}>
      <Caption $x={14} $y={16} $ls={-0.29}>Does Extra Activities Affect Result?</Caption>
      <svg width="271" height="202">
        <circle cx="125.700" cy="123" r="62.700" fill={orange} />
        <path d="M125.700 123V60.300A62.700 62.700 0 0 0 63 123A62.700 62.700 0 0 0 115.740 184.900z" fill="#efa788" />
        <path d="M68 71h10l4 5M165 172l4 7h10" stroke="#2c5478" fill="none" />
        <ChartText x="65" y="69" textAnchor="end">0.5</ChartText>
        <ChartText x="26.500" y="81" textLength="38.500">(47.46%)</ChartText>
        <ChartText x="181.500" y="183" textLength="57">0.55... (52...)</ChartText>
      </svg>
    </Visual>

    <Visual $x={652} $y={80} $w={341} $h={226.5} $r={56}>
      <Caption $x={39} $y={16} $ls={-0.15}>Performance by Age &amp; Gender</Caption>
      <svg width="341" height="227">
        {["10K", "5K", "0K"].map((t, i) => (
          <ChartText key={t} x="40" y={61 + i * 65} textAnchor="end">{t}</ChartText>
        ))}
        {ageBars.map((b) => (
          <g key={b.label}>
            <rect x={b.x} y={b.top} width="63.500" height={187 - b.top} fill={orange} />
            <rect x={b.x} y={b.top - 1.5} width="63.500" height="1.500" fill="#12239e" />
            <ChartText x={b.x + 33.5} y="200" textAnchor="middle">{b.label}</ChartText>
          </g>
        ))}
        <ChartText x="185.500" y="213" textLength="25">Other</ChartText>
      </svg>
    </Visual>

    <Visual $x={222} $y={315} $w={398.5} $h={235} $r={60}>
      <Caption $x={20} $y={13} $ls={-0.38}>Does Parents Education Influence success?</Caption>
      <svg width="398" height="235">
        {["100", "50", "0"].map((t, i) => (
          <ChartText key={t} x="37" y={50 + i * 82.5} textAnchor="end">{t}</ChartText>
        ))}
        {parentBars.map((b) => (
          <g key={b.label}>
            <rect x={b.x} y={b.top} width="54.500" height={211.5 - b.top} fill={orange} />
            <ChartText x={b.x + 28.5 - b.w / 2} y="224" textLength={b.w}>{b.label}</ChartText>
          </g>
        ))}
      </svg>
    </Visual>

    <Visual $x={634} $y={316} $w={359} $h={235} $r={60}>
      <Caption $x={32.5} $y={12} $ls={-0.18}>Does Studying More Help?</Caption>
      <svg width="359" height="235">
        {["100", "80", "60"].map((t, i) => (
          <ChartText key={t} x="30.500" y={58 + i * 58.5} textAnchor="end">{t}</ChartText>
        ))}
        {["1", "2", "3", "4", "5"].map((t, i) => (
          <ChartText key={t} x={46.5 + i * 71} y="213" textAnchor="middle">{t}</ChartText>
        ))}
        <g transform="translate(-5 -6) scale(.33333)">
          <polyline points={studySeries} fill="none" stroke={orange} strokeWidth="7.500" strokeLinejoin="round" strokeLinecap="round" />
        </g>
      </svg>
    </Visual>
    <PageEdge />
  </Canvas>
);

export default function App() {
  return (
    <Window>
      <GlobalStyle />
      <TitleBar>
        <TopMarker />
        <Slot $w={31}>
          <svg width="15" height="15" viewBox="0 0 15 15" fill="none" stroke="#e0e0e0" strokeWidth="1.100">
            <path d="M.5 .5h14v14H2L.5 13zM3.500 .5v6h8v-6M4.500 14.500v-4.500h6v4.500M8 .5v3" />
          </svg>
        </Slot>
        <Slot $w={30}>
          <svg width="15" height="16" viewBox="0 0 15 16" fill="none" stroke="#e0e0e0" strokeWidth="1.300">
            <path d="M.7 .5v6h6M1 6.300C4 1 10 0 13 3.500s.5 6-6 12" />
          </svg>
        </Slot>
        <Slot $w={24}>
          <svg width="15" height="16" viewBox="0 0 15 16" fill="none" stroke="#565656" strokeWidth="1.300">
            <path d="M14.300 .5v6h-6M14 6.300C11 1 5 0 2 3.500s-.5 6 6 12" />
          </svg>
        </Slot>
        <DocName>{"students performance • Last saved: 01/06/2025 at 15:18"}</DocName>
        <svg width="8" height="6" viewBox="0 0 8 6" fill="none" stroke="#c0c0c0"><path d="M.5 .5h7L4 5z" /></svg>
        <Spacer />
        <SignIn>Sign in</SignIn>
        <Slot $w={52}>
          <svg width="20" height="20" viewBox="0 0 20 20" fill="none" stroke="#a8a8a8" strokeWidth="1.200">
            <circle cx="10" cy="9" r="10" fill="#3a3a3a" stroke="none" />
            <circle cx="10" cy="5" r="3" />
            <path d="M4 10.500h12c0 3.500-3 5.500-6 5.500s-6-2-6-5.500z" />
          </svg>
        </Slot>
        <Slot $w={44}>
          <svg width="10" height="10"><path d="M0 4.500h10" stroke="#fff" /></svg>
        </Slot>
        <Slot $w={44}>
          <svg width="10" height="10"><path d="M.5 .5h9v9h-9z" fill="none" stroke="#fff" /></svg>
        </Slot>
        <Slot $w={27}>
          <svg width="11" height="11"><path d="M.5 .5l10 10M10.500 .5l-10 10" stroke="#fff" strokeWidth="1.100" /></svg>
        </Slot>
      </TitleBar>

      <TabStrip>
        {([["File", 54], ["Home", 61], ["Insert", 59], ["Modeling", 82], ["View", 53], ["Optimize", 80], ["Help", 60]] as [string, number][]).map(
          ([t, w]) => (
            <Tab key={t} $w={w} $active={t === "Home"}><span>{t}</span></Tab>
          )
        )}
        <Spacer />
        <ShareButton>
          <svg width="16" height="14" viewBox="0 0 16 14" fill="none" stroke="#b9d2cb">
            <path d="M.5 3v10.500h11V10M10 .5 15.500 5 10 9V6.500C7 6.500 5 7.500 3.500 10 4 6 6 3.500 10 3z" />
          </svg>
          <span>Share</span>
          <Chevron s={10} color="#b9d2cb" w={1} />
        </ShareButton>
      </TabStrip>

      <Ribbon>
        <Group $w={161}>
          <GroupItems $pad={7}>
            <Command $w={42}>
              <Big>
                <path d="M6 6.500h18v22H6z" stroke="#f5a93a" strokeWidth="2" />
                <path d="M9 9V6c0-1 2-1.500 3.500-1.500 0-3 5-3 5 0 1.500 0 3.500.5 3.500 1.500v3z" fill="#292929" stroke="#9a9a9a" />
                <path d="M18.500 14.500h13v16h-13z" fill="#292929" />
              </Big>
              <CommandText>Paste</CommandText>
            </Command>
            <ClipList>
              <ClipRow>
                <svg width="16" height="16" viewBox="0 0 16 16" fill="none" stroke="#6a6a6a">
                  <path d="M5 .5 9.500 11M11 .5 6.500 11" />
                  <path d="M3.500 11h3v3.500h-3zM9.500 11h3v3.500h-3z" stroke="#2d5878" strokeWidth="1.300" />
                </svg>
                Cut
              </ClipRow>
              <ClipRow>
                <svg width="16" height="16" viewBox="0 0 16 16" fill="none" stroke="#666">
                  <path d="M4 14.500H.5V.5H7L8 2M5.500 3.500h6l4 4v8h-10zM11.500 3.500v4h4M8 9.500h5M8 12h5" />
                </svg>
                Copy
              </ClipRow>
              <ClipRow>
                <svg width="16" height="16" viewBox="0 0 16 16" fill="none" stroke="#777">
                  <path d="M.5 8 6 5l5 5-4 5z" fill="#6e5a38" stroke="#7d6a48" />
                  <path d="M6 5 8.500 3 13 7.500 11 10M10.500 4.500l3-4 2 2-3.500 4" />
                </svg>
                Format painter
              </ClipRow>
            </ClipList>
          </GroupItems>
          <GroupName>Clipboard</GroupName>
        </Group>
        {groups.map((g) => (
          <Group key={g.name} $w={g.w}>
            <GroupItems $pad={g.pad}>
              {g.items.map((c) => (
                <Command key={c.lines.join()} $w={c.w} $dim={c.dim}>
                  {c.icon}
                  {c.lines.map((l, i) => (
                    <CommandText key={i}>
                      {l}
                      {c.menu && i === c.lines.length - 1 && <Chevron color={c.dim ? "#666" : "#ddd"} />}
                    </CommandText>
                  ))}
                </Command>
              ))}
            </GroupItems>
            <GroupName>{g.name}</GroupName>
          </Group>
        ))}
        <Collapse><Chevron up s={9} w={1.6} color="#fff" /></Collapse>
      </Ribbon>

      <Body>
        <Rail>
          <RailItem $active>
            <svg width="14" height="14" viewBox="0 0 14 14" fill="none" stroke="#fff"><path d="M.5 0v13.500H14M2.500 4.500h2.500v7H2.500zM6.500 6.500H9v5H6.500zM10.500 1.500H13v10h-2.500z" /></svg>
          </RailItem>
          <RailItem>
            <svg width="16" height="15" viewBox="0 0 16 15" fill="none" stroke="#d0d0d0"><path d="M.5 .5h15v14H.5zM.5 3h15M.5 6.500h15M.5 10.500h15M5.500 3v11.500M10.500 3v11.500" /></svg>
          </RailItem>
          <RailItem>
            <svg width="18" height="18" viewBox="0 0 18 18" fill="none" stroke="#d0d0d0"><path d="M.5 5.500H7v7H.5zM.5 8H7M10.500 .5h7V7h-7zM10.500 3h7M10.500 10.500h7v7h-7zM10.500 13h7M4 5.500V2.500h6.500M4 12.500v3h6.500" /></svg>
          </RailItem>
          <RailItem>
            <svg width="18" height="17" viewBox="0 0 18 17" fill="none" stroke="#d0d0d0">
              <path d="M4.500 10V2.500c0-1 1-2 2-2h4.500L15 5v9M11 .5V5h4M17 6v8l-2 2" />
              <text x="0" y="16" fontSize="7" fill="#e8e8e8" stroke="none" fontWeight="600">DAX</text>
            </svg>
          </RailItem>
        </Rail>

        <Center>
          <CenterTop>
            <Dashboard />
            <FiltersPane>
              <DoubleChevron flip color="#444" />
              <FilterGlyph width="9" height="10" viewBox="0 0 9 10" stroke="#444" strokeWidth="1.200"><path d="M1.500 4v2M4.500 2.500v5M7.500 .5v9" /></FilterGlyph>
              <FiltersLabel>Filters</FiltersLabel>
            </FiltersPane>
          </CenterTop>
          <PageTabs>
            <ViewButton $w={44} $active>
              <svg width="16" height="18" viewBox="0 0 16 18" fill="none" stroke="#eee" strokeWidth="1.400"><rect x=".7" y=".5" width="14.600" height="11.500" rx="1.500" /><path d="M5.500 12v3.500M10.500 12v3.500M3.500 16h9" /></svg>
            </ViewButton>
            <ViewButton $w={44}>
              <svg width="11" height="18" viewBox="0 0 11 18" fill="none" stroke="#eee" strokeWidth="1.400"><rect x=".7" y=".2" width="9.600" height="16.600" rx="2" /><path d="M4 14h3" /></svg>
            </ViewButton>
            <Slot $w={5} />
            <Slot $w={21}><svg width="6" height="8" viewBox="0 0 6 8" fill="none" stroke="#ccc"><path d="M5 .5v7L.8 4z" /></svg></Slot>
            <Slot $w={13}><svg width="6" height="8" viewBox="0 0 6 8" fill="none" stroke="#ccc"><path d="M1 .5v7L5.200 4z" /></svg></Slot>
            <PageTab>Page 1</PageTab>
            <AddPage><svg width="11" height="11"><path d="M5.500 0v11M0 5.500h11" stroke="#1b2f2b" strokeWidth="2.800" /></svg></AddPage>
          </PageTabs>
        </Center>

        <Pane $w={181}>
          <PaneHeader>Visualizations<DoubleChevron /></PaneHeader>
          <BuildLabel>Build visual</BuildLabel>
          <Modes>
            <Mode $active>
              <svg width="24" height="25" viewBox="0 0 24 25" fill={teal} stroke="#d8d8d8"><path d="M0 .5h19" /><path d="M.5 5.500h23v7H.5zM.5 16.500h23v7H.5z" strokeDasharray="2 1" /></svg>
            </Mode>
            <Mode>
              <svg width="25" height="25" viewBox="0 0 25 25" fill="none" stroke="#c0c0c0"><path d="M9 23.500H1.500V.5H12L18 7v1M12 .5V7h6z" /><path d="M12 .5V7h6z" fill="#eee" /><path d="M24 8.500c-4 2-7 5-9 9l2.500 1.500C20 16 23 12 24 8.500zM15 17.500c-3 0-4 3-7 5.500 5 1 9 0 9.500-4z" /></svg>
            </Mode>
          </Modes>
          <svg width="180" height="9" fill="none" stroke="#6e6e6e"><path d="M0 7.500h16L24 0l8 7.500h148" /></svg>
          <VizGrid>
            {gallery.map((g, i) => (
              <svg key={i} width="18" height="18" viewBox="0 0 18 18" fill="none">{g}</svg>
            ))}
          </VizGrid>
          <More><i /><i /><i /></More>
          <Wells>
            <WellLabel>Values</WellLabel>
            <Well>Add data fields here</Well>
            <WellLabel $bold>Drill through</WellLabel>
            <Switches>
              <SwitchRow>Cross-report<Switch>Off</Switch></SwitchRow>
              <SwitchRow>Keep all filters<Switch $on>On</Switch></SwitchRow>
            </Switches>
            <Well $dark>Add drill-through fields here</Well>
          </Wells>
        </Pane>

        <Pane $w={181}>
          <PaneHeader>Data<DoubleChevron /></PaneHeader>
          <SearchBox>
            <svg width="15" height="15" viewBox="0 0 15 15" fill="none" stroke="#b0b0b0"><circle cx="6" cy="6" r="5" /><path d="m9.500 9.500 5 5" /></svg>
            Search
          </SearchBox>
          <TableRow>
            <Slot $w={14}><Chevron s={8} /></Slot>
            <svg width="13" height="15" viewBox="0 0 13 15" fill="none" stroke="#e8e8e8"><rect x=".5" y=".5" width="10" height="12" rx="1.500" /><path d="M3 3h5v2H3z" /><path d="M2.500 8h1.500M5 8h1.500M7.500 8H9M2.500 10.500h1.500M5 10.500h1.500M7.500 10.500H9" strokeWidth="1.500" /><path d="M12.500 3v9.500c0 1-1 2-2 2H4" /></svg>
            <span>Table</span>
          </TableRow>
          {measures.map((m) => (
            <FieldRow key={m}><Check /><FieldIcon><MeasureIcon /></FieldIcon>{m}</FieldRow>
          ))}
          <TableRow>
            <Slot $w={14}><Chevron s={8} /></Slot>
            <TableIcon />
            <span>view_students_perfor...</span>
          </TableRow>
          {fields.map(([f, numeric]) => (
            <FieldRow key={f}><Check /><FieldIcon>{numeric && <SigmaIcon />}</FieldIcon>{f}</FieldRow>
          ))}
        </Pane>
      </Body>

      <StatusBar>
        Page 1 of 1
        <Spacer />
        <Zoom>
          <svg width="123" height="12" viewBox="0 0 123 12" stroke="#e8e8e8" fill="none">
            <path d="M0 6.500h4" strokeWidth="1.500" /><path d="M9 5.500h100M60.500 3.500v4" /><path d="M46.500 0v11" strokeWidth="4" /><path d="M115 5.500h7M118.500 2v7" />
          </svg>
          78%
          <svg width="14" height="10" viewBox="0 0 14 10" fill="none" stroke="#ddd"><rect x=".5" y=".5" width="13" height="9" rx="1" /><path d="M5 2.500H3v2M9 2.500h2v2M5 7.500H3v-2M9 7.500h2v-2" /></svg>
        </Zoom>
      </StatusBar>

      <Taskbar>
        <TaskSlot $w={48}>
          <svg width="16" height="16" fill="#fff"><path d="M0 2.300 7 1.300V7.500H0zM8 1.200 16 0v7.500H8zM0 8.500h7v6.200L0 13.700zM8 8.500h8V16l-8-1.200z" /></svg>
        </TaskSlot>
        <TaskSearch>
          <svg width="17" height="17" viewBox="0 0 17 17" fill="none" stroke="#222" strokeWidth="1.300"><circle cx="10.500" cy="6.500" r="5.500" /><path d="M6.500 10.500 .5 16.500" /></svg>
          <span>Type here to search</span>
          <svg width="61" height="26" viewBox="0 0 61 26">
            <path d="M24 1c2 7 5 9 12 11-7 2.500-10 4-12 11-2-7-5-8.500-12-11 7-2.500 10-4 12-11z" fill="#fcc11e" stroke="#fcc11e" strokeWidth="2" strokeLinejoin="round" />
            <path d="M46 11c1 4 2 5 6 6-4 1-5 2-6 6-1-4-2-5-6-6 4-1 5-2 6-6z" fill="#fcb22e" />
            <path d="M5 16c.8 3 1.500 3.500 4.500 4.500C6.500 21.500 6 22 5 25c-1-3-1.500-3.500-4.500-4.500C3.500 19.500 4.200 19 5 16z" fill="#1e9bf0" />
            <circle cx="42" cy="3" r="2.300" fill="#f0703a" /><circle cx="58" cy="23" r="1.800" fill="#9ac73c" />
          </svg>
        </TaskSearch>
        <TaskSlot $w={49}>
          <svg width="17" height="16" viewBox="0 0 17 16" fill="none" stroke="#fff" strokeWidth="1.200"><path d="M.6 0v2.500h10V0M.6 5h10v6H.600zM.6 16v-2.500h10V16M14.500 0v16M13 5h3v2h-3z" /></svg>
        </TaskSlot>
        <TaskSlot $w={51}><CopilotMark size={22} /></TaskSlot>
        <Slot $w={4} />
        <TaskSlot $w={40} $open>
          <svg width="26" height="26" viewBox="0 0 26 26">
            <defs><linearGradient id="edge" x1="0" y1="0" x2="1" y2=".5"><stop stopColor="#2394e0" /><stop offset=".6" stopColor="#32c4b4" /><stop offset="1" stopColor="#66d94a" /></linearGradient></defs>
            <circle cx="13" cy="12" r="12" fill="#1670c4" />
            <path d="M1 12A12 12 0 0 1 25 11c0 4-3 6-6 6-4 0-3-2-3-4 0-3-3-5-6-5-4 0-8 2-9 4z" fill="url(#edge)" />
            <circle cx="7" cy="19" r="6.500" fill="#c2bdb8" /><circle cx="7" cy="17" r="2.500" fill="#6f6a66" /><path d="M2.500 23a5 5 0 0 1 9 0c-2 3-7 3-9 0z" fill="#6f6a66" />
          </svg>
        </TaskSlot>
        <Slot $w={8} />
        <TaskSlot $w={41} $open>
          <svg width="23" height="20" viewBox="0 0 23 20"><path d="M1 0h7l2 2.500h12V18H1z" fill="#f0a81c" /><path d="M1 5h21v14H1z" fill="#ffd869" /><path d="M5 20v-7c0-1 1-2 2-2h9c1 0 2 1 2 2v7h-4v-4H9v4z" fill="#3a94dc" /></svg>
        </TaskSlot>
        <Slot $w={4} />
        <TaskSlot $w={50}>
          <svg width="24" height="24" viewBox="0 0 24 24"><path d="M7 6V3c0-1 1-2 2-2h6c1 0 2 1 2 2v3" fill="none" stroke="#38a9ee" strokeWidth="1.800" /><rect y="5" width="24" height="18" rx="2" fill="#f6f6f6" /><path d="M7 9h4.500v4.500H7z" fill="#f25022" /><path d="M12.500 9H17v4.500h-4.500z" fill="#7fba00" /><path d="M7 14.500h4.500V19H7z" fill="#00a4ef" /><path d="M12.500 14.500H17V19h-4.500z" fill="#ffb900" /></svg>
        </TaskSlot>
        <TaskSlot $w={49}>
          <svg width="25" height="24" viewBox="0 0 25 24"><path d="M14.500 0 24 6v15c0 1-.5 2-2 2H8c-1.500 0-2-1-2-2V6z" fill="#1467c0" /><path d="M8.500 4h12v11h-12z" fill="#36b0f4" /><path d="M24 8v13c0 1-.5 2-2 2H8c-1 0-2-.500-2-2l9-6z" fill="#49b9f7" /><path d="M6 21 15 15l8 7.500c-.5.500-14 .5-15 .5-1 0-2-.500-2-2z" fill="#1e8ae2" /><rect y="6.500" width="13" height="13" rx="1.500" fill="#0a5fb8" /><circle cx="6.500" cy="13" r="3" fill="none" stroke="#fff" strokeWidth="1.800" /></svg>
        </TaskSlot>
        <TaskSlot $w={48} $open $active>
          <svg width="20" height="25" viewBox="0 0 20 25"><rect x="10" width="9" height="25" rx="1" fill="#e0a418" /><rect x="5" y="6" width="9" height="19" rx="1" fill="#f2c32c" /><rect y="12" width="9" height="13" rx="1" fill="#f9dc62" /></svg>
        </TaskSlot>
        <Slot $w={5} />
        <TaskSlot $w={40} $open>
          <svg width="23" height="24" viewBox="0 0 23 24"><rect width="23" height="24" rx="2.500" fill="#1477d6" /><path d="M1.500 22.500 11 9.500q1-1 2 0l8.500 13q-1 1.500-2.500 1.500H3.500z" fill="#8fe0ff" /><path d="M5 24l6-6.500q1-1 2 0l5.500 6.500z" fill="#0d4f9c" /><circle cx="16.500" cy="5.500" r="2" fill="#fff" /></svg>
        </TaskSlot>
        <Spacer />
        <Weather>
          <svg width="26" height="22" viewBox="0 0 26 22"><circle cx="16" cy="8" r="7.500" fill="#f59a23" /><path d="M5 22a5.500 5.500 0 0 1-1-10.500A7.500 7.500 0 0 1 18 11a5.500 5.500 0 0 1 2 11z" fill="#9dbdf2" /></svg>
          {"15°C  Mostly cloudy"}
        </Weather>
        <Slot $w={28}><svg width="15" height="7" viewBox="-3 0 15 7" fill="none" stroke="#fff" strokeWidth="1.200"><path d="M.5 6.500 6 1l5.500 5.500" /></svg></Slot>
        <Slot $w={21}><svg width="11" height="16" viewBox="0 0 11 16" fill="none" stroke="#fff"><rect x=".5" y="3.500" width="8" height="9" rx="1.500" /><circle cx="4.500" cy="8" r="1.800" /><path d="M8.500 7 10.500 5.500v5L8.500 9M1.500 1h6M1.500 15h6" /></svg></Slot>
        <Slot $w={25}><svg width="17" height="15" viewBox="0 0 17 15"><path d="M3 11a3 3 0 0 1 0-6 5 5 0 0 1 9-1c3 0 4 2 4 4z" fill="#c9c9c9" /><circle cx="11" cy="9.500" r="5" fill="#1e90e0" /><path d="M11 7v1M11 9v3.500" stroke="#fff" strokeWidth="1.300" /></svg></Slot>
        <Slot $w={26}><svg width="15" height="9" fill="none" stroke="#fff"><path d="M.5 .5h12.500v8H.5zM14.500 3v3" /><path d="M2.500 2.500h5v4h-5z" fill="#fff" /></svg></Slot>
        <Slot $w={21}><svg width="13" height="13" viewBox="0 0 13 13" fill="none" stroke="#e0e0e0" strokeWidth="1.200"><path d="M.5 12A13 13 0 0 1 12.500 1M3.500 12.500a10 10 0 0 1 9-8M6.500 12.500a7 7 0 0 1 6-5M9.500 12.500a4 4 0 0 1 3-2.500" /></svg></Slot>
        <Slot $w={26}><svg width="16" height="13" viewBox="0 0 16 13" fill="none" stroke="#fff"><path d="M.5 4.500H3L6.500 1v11L3 8.500H.5zM9 4c1 1.500 1 3.500 0 5M11.500 2.500c2 2.500 2 5.500 0 8M13.500 1c2.500 3.500 2.500 7.500 0 11" /></svg></Slot>
        <Lang>ENG</Lang>
        <Clock>18:44<br />08/06/2025</Clock>
        <Notifications>
          <svg width="26" height="24" viewBox="0 0 26 24">
            <path d="M1 3h15v12h-5l-3 4v-4H1z" fill="#fff" /><path d="M4 6.500h9M4 9h9M4 11.500h6" stroke="#1b2a30" />
            <circle cx="16" cy="18.500" r="8" fill="#45525a" stroke="#8b959a" /><text x="13.200" y="22.500" fill="#fff" fontSize="11">2</text>
          </svg>
        </Notifications>
      </Taskbar>

      <Watermark>
        <h3>Activate Windows</h3>
        <p>Go to Settings to activate Windows.</p>
      </Watermark>
    </Window>
  );
}
